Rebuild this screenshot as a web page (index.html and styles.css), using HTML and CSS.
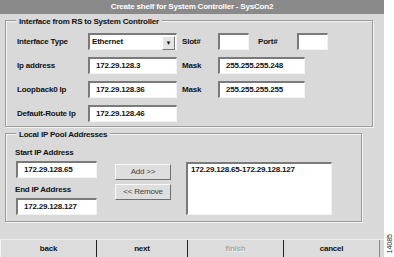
FILE: index.html
```html
<!DOCTYPE html>
<html lang="en">
<head>
    <meta charset="UTF-8">
    <title>Create shelf for System Controller - SysCon2</title>
    <link rel="stylesheet" href="styles.css">
</head>
<body>
    <div class="dialog">
        <div class="titlebar">Create shelf for System Controller - SysCon2</div>

        <div class="main">
            <!-- Interface from RS to System Controller -->
            <div class="group group-iface">
                <div class="legend">Interface from RS to System Controller</div>
                <div class="row">
                    <span class="label">Interface Type</span>
                    <div class="select field">
                        <span class="select-text">Ethernet</span>
                        <span class="select-arrow">&#9660;</span>
                    </div>
                    <span class="label label2">Slot#</span>
                    <div class="field field-small"></div>
                    <span class="label label3">Port#</span>
                    <div class="field field-small"></div>
                </div>
                <div class="row">
                    <span class="label">Ip address</span>
                    <div class="field field-ip">172.29.128.3</div>
                    <span class="label label2">Mask</span>
                    <div class="field field-mask">255.255.255.248</div>
                </div>
                <div class="row">
                    <span class="label">Loopback0 Ip</span>
                    <div class="field field-ip">172.29.128.36</div>
                    <span class="label label2">Mask</span>
                    <div class="field field-mask">255.255.255.255</div>
                </div>
                <div class="row">
                    <span class="label">Default-Route Ip</span>
                    <div class="field field-ip">172.29.128.46</div>
                </div>
            </div>

            <!-- Local IP Pool Addresses -->
            <div class="group group-pool">
                <div class="legend">Local IP Pool Addresses</div>
                <div class="pool">
                    <div class="pool-inputs">
                        <span class="label">Start IP Address</span>
                        <div class="field field-pool">172.29.128.65</div>
                        <span class="label label-end">End IP Address</span>
                        <div class="field field-pool">172.29.128.127</div>
                    </div>
                    <div class="pool-buttons">
                        <div class="btn">Add &gt;&gt;</div>
                        <div class="btn">&lt;&lt; Remove</div>
                    </div>
                    <div class="field listbox">
                        <div class="list-item">172.29.128.65-172.29.128.127</div>
                    </div>
                </div>
            </div>
        </div>

        <div class="navbar">
            <div class="nav-btn nav-back">back</div>
            <div class="nav-btn nav-next">next</div>
            <div class="nav-btn nav-finish disabled">finish</div>
            <div class="nav-btn nav-cancel">cancel</div>
        </div>
    </div>
    <div class="side">
        <span class="figno">14085</span>
    </div>
</body>
</html>
```

FILE: styles.css
```css
body {
    margin: 0;
    padding: 0;
    display: flex;
    background-color: #fff;
    font-family: "Liberation Sans", Arial, sans-serif;
    font-size: 8px;
    letter-spacing: -0.2px;
    color: #111;
}

.dialog {
    width: 384px;
    height: 257px;
    background-color: #d9d9d9;
    display: flex;
    flex-direction: column;
}

.titlebar {
    height: 14px;
    line-height: 14px;
    background-color: #8a8a8a;
    color: #fff;
    font-weight: bold;
    text-align: center;
}

.main {
    padding: 6px 0 0 5px;
    flex: 1;
}

/* Grupos con borde grabado */
.group {
    width: 355px;
    border: 1px solid #9a9a9a;
    box-shadow: inset 1px 1px 0 #f4f4f4, 1px 1px 0 #f4f4f4;
}

.group-iface {
    height: 105px;
    padding-left: 11px;
    box-sizing: content-box;
}

.group-pool {
    margin-top: 6px;
    height: 87px;
}

.legend {
    display: table;
    margin: -4px 0 0 10px;
    padding: 0 3px;
    background-color: #d9d9d9;
    font-weight: bold;
    line-height: 9px;
}

.group-iface .legend {
    margin-left: -1px;
}

.row {
    display: flex;
    align-items: center;
    height: 17px;
    margin-top: 7px;
}

.row:first-of-type {
    margin-top: 5px;
}

.label {
    font-weight: bold;
    white-space: nowrap;
}

.row .label {
    width: 71px;
    flex-shrink: 0;
}

.row .label2 {
    width: 36px;
    margin-left: 5px;
}

.row .label3 {
    width: 39px;
    margin-left: 9px;
}

/* Campos de texto */
.field {
    box-sizing: border-box;
    height: 17px;
    line-height: 14px;
    background-color: #fff;
    border-top: 2px solid #7a7a7a;
    border-left: 2px solid #7a7a7a;
    border-right: 1px solid #f2f2f2;
    border-bottom: 1px solid #f2f2f2;
    padding-left: 6px;
    font-weight: 600;
    white-space: nowrap;
}

.field-ip {
    width: 89px;
}

.field-mask {
    width: 87px;
}

.field-small {
    width: 31px;
}

.select {
    width: 89px;
    display: flex;
    justify-content: space-between;
    padding-left: 2px;
    font-weight: bold;
}

.select-arrow {
    width: 11px;
    height: 12px;
    margin: 1px 1px 0 0;
    background-color: #e4e4e4;
    border-top: 1px solid #fff;
    border-left: 1px solid #fff;
    border-right: 1px solid #777;
    border-bottom: 1px solid #777;
    font-size: 6px;
    line-height: 12px;
    text-align: center;
    letter-spacing: 0;
}

/* Pool de direcciones */
.pool {
    display: flex;
    padding: 9px 0 0 9px;
}

.pool-inputs {
    display: flex;
    flex-direction: column;
    width: 81px;
}

.field-pool {
    width: 81px;
    margin-top: 4px;
    margin-left: 1px;
}

.label-end {
    margin-top: 7px;
}

.pool-buttons {
    display: flex;
    flex-direction: column;
    gap: 4px;
    margin: 16px 0 0 19px;
}

.btn {
    box-sizing: border-box;
    width: 56px;
    height: 16px;
    line-height: 14px;
    text-align: center;
    background-color: #dedede;
    color: #444;
    border-top: 1px solid #fafafa;
    border-left: 1px solid #fafafa;
    border-right: 1px solid #6e6e6e;
    border-bottom: 1px solid #6e6e6e;
}

.listbox {
    width: 146px;
    height: 53px;
    margin: 14px 0 0 15px;
    padding-left: 3px;
}

.list-item {
    font-weight: bold;
    line-height: 12px;
}

/* Barra de navegacion */
.navbar {
    display: flex;
    height: 17px;
    border-top: 1px solid #ededed;
}

.nav-btn {
    box-sizing: border-box;
    height: 17px;
    line-height: 17px;
    text-align: center;
    font-weight: bold;
    background-color: #dcdcdc;
    border-left: 1px solid #f4f4f4;
}

.nav-back {
    width: 96px;
}

.nav-next {
    width: 91px;
    border-left: 1px solid #222;
}

.nav-finish {
    width: 96px;
    border-left: 1px solid #222;
}

.nav-cancel {
    width: 97px;
    border-left: 1px solid #222;
    border-right: 1px solid #888;
}

.disabled {
    color: #a8a8a8;
    text-shadow: 1px 1px 0 #f0f0f0;
}

.side {
    width: 10px;
    display: flex;
    align-items: flex-end;
    justify-content: center;
    padding-bottom: 4px;
}

.figno {
    writing-mode: vertical-rl;
    transform: rotate(180deg);
    font-size: 7px;
    letter-spacing: 0;
    color: #222;
}
```
